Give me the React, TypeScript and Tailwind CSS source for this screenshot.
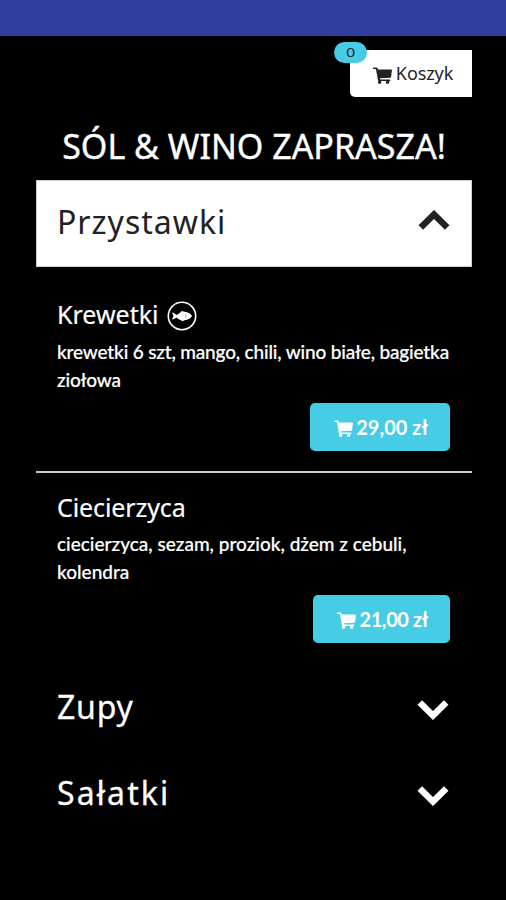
import React from "react";

interface Dish {
  name: string;
  description: string[];
  price: string;
  fish?: boolean;
}

const dishes: Dish[] = [
  {
    name: "Krewetki",
    description: ["krewetki 6 szt, mango, chili, wino białe, bagietka", "ziołowa"],
    price: "29,00 zł",
    fish: true,
  },
  {
    name: "Ciecierzyca",
    description: ["ciecierzyca, sezam, proziok, dżem z cebuli,", "kolendra"],
    price: "21,00 zł",
  },
];

const CartIcon: React.FC = () => (
  <svg className="h-[18px] w-[19px] shrink-0 translate-y-[2px]" viewBox="0 0 19 18" fill="currentColor">
    <path d="M.7.600h2.900c.5 0 .8.300.9.700l.5 1.300h13.200c.4 0 .7.300.7.700l-.8 6.700c0 .5-.4.800-.9.800l-10.300.5.300 1.200h9.500c.4 0 .7.300.7.700s-.3.700-.7.700H5.900c-.5 0-.8-.3-.9-.7L2.900 2.100H.7a.75.75 0 0 1 0-1.500z" />
    <rect x="5" y="13.500" width="3.200" height="3.300" rx="1" />
    <rect x="13" y="13.500" width="3.200" height="3.300" rx="1" />
  </svg>
);

const FishIcon: React.FC = () => (
  <svg className="h-[30px] w-[30px] shrink-0 translate-y-px" viewBox="0 0 30 30">
    <circle cx="15" cy="15" r="13.700" fill="none" stroke="currentColor" strokeWidth="1.600" />
    <path
      d="M4.800 11.600c1.900.2 3 1.200 4.700 2.400l3.200-2 2.200-2 2.700.7c3.500.4 5.700 1.700 7.500 4.300-1.700 2.600-4.300 3.900-7.500 4.200l-2.200 1-1.800-1.300c-1.700-.5-2.900-1.300-4.100-2.400-1.300 1-2.600 1.800-4.700 2 .9-1.200 1.500-2.300 1.500-3.500s-.6-2.300-1.500-3.400z"
      fill="currentColor"
    />
    <path d="M18.700 13q.7 2 0 4" fill="none" stroke="#999" strokeWidth=".8" />
  </svg>
);

const Chevron: React.FC<{ up?: boolean }> = ({ up }) => (
  <svg className="h-[22px] w-8" viewBox="0 0 32 22" fill="none" stroke="currentColor" strokeWidth="6.500">
    <path d={up ? "M2.800 17.500 16 4.500 29.200 17.500" : "M2.800 4.500 16 17.500 29.200 4.500"} />
  </svg>
);

const DishRow: React.FC<{ dish: Dish }> = ({ dish }) => (
  <div className="pr-[22px] pl-[21px]">
    <h3 className="flex h-8 items-center gap-[9px] text-[25px] leading-8 [-webkit-text-stroke:0.2px]">
      <span className={dish.fish ? "-translate-y-px" : "tracking-[-0.1px]"}>{dish.name}</span>
      {dish.fish && <FishIcon />}
    </h3>
    <p className="mt-[7px] font-['Lato'] text-[19px] leading-7 font-medium whitespace-nowrap [-webkit-text-stroke:0.2px]">
      {dish.description.map((line) => (
        <span key={line} className={dish.fish ? "block tracking-[-0.17px]" : "block"}>
          {line}
        </span>
      ))}
    </p>
    <div className="mt-[9px] flex justify-end">
      <button
        className={
          dish.fish
            ? "flex h-12 items-center gap-[3px] rounded-[5px] bg-[#47cce6] pr-[22px] pl-[24px] font-['Lato'] text-[20px] font-bold"
            : "flex h-12 items-center gap-[3px] rounded-[5px] bg-[#47cce6] pr-[22px] pl-[24px] font-['Lato'] text-[20px] font-bold tracking-[-0.4px]"
        }
      >
        <CartIcon />
        <span>{dish.price}</span>
      </button>
    </div>
  </div>
);

const App: React.FC = () => {
  return (
    <div className="h-[900px] w-[506px] overflow-hidden bg-black font-['Noto_Sans',sans-serif] text-white">
      <div className="h-9 bg-[#303f9f]" />
      <main className="pt-[14px] pr-[34px] pl-[36px]">
        <div className="flex justify-end">
          <button className="relative flex h-[47px] w-[122px] items-center justify-center gap-1 rounded-bl-[5px] bg-white pl-[4px] text-[#222]">
            <CartIcon />
            <span className="text-[18px] tracking-[-0.1px]">Koszyk</span>
            <span className="absolute -top-2 -left-4 flex h-[21px] w-[33px] items-center justify-center rounded-full bg-[#47cce6] text-[13px]">
              <span className="scale-x-125">0</span>
            </span>
          </button>
        </div>

        <h1 className="mt-[25px] h-[58px] text-center text-[34px] leading-[48px] whitespace-nowrap [-webkit-text-stroke:0.4px]">
          SÓL &amp; WINO ZAPRASZA!
        </h1>

        {/* Expanded category */}
        <div className="flex h-[87px] items-center justify-between border border-[#ccc] bg-white pr-[21px] pl-[20px] text-[#222]">
          <h2 className="-translate-y-[2px] text-[32px] tracking-[1px]">Przystawki</h2>
          <span className="-translate-y-[3px]">
            <Chevron up />
          </span>
        </div>
        <div className="pt-[32px]">
          <DishRow dish={dishes[0]} />
          <div className="mt-[20px] mb-[18px] h-[2px] bg-[#ccc]" />
          <DishRow dish={dishes[1]} />
        </div>

        {/* Collapsed categories */}
        <div className="mt-[23px] flex h-[86px] items-center justify-between pr-[23px] pl-[21px]">
          <h2 className="-translate-y-[2px] text-[32px] tracking-[0.8px] [-webkit-text-stroke:0.3px]">Zupy</h2>
          <Chevron />
        </div>
        <div className="flex h-[86px] items-center justify-between pr-[23px] pl-[21px]">
          <h2 className="-translate-y-[2px] text-[32px] tracking-[2.1px] [-webkit-text-stroke:0.3px]">Sałatki</h2>
          <Chevron />
        </div>
      </main>
    </div>
  );
};

export default App;
